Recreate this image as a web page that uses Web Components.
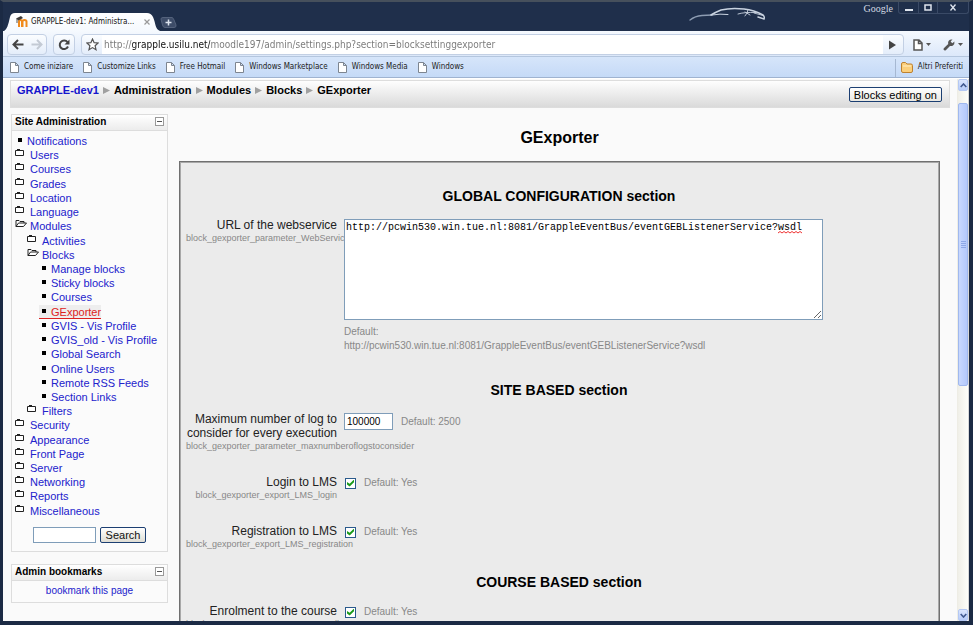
<!DOCTYPE html>
<html lang="en">
<head>
<meta charset="utf-8">
<title>GRAPPLE-dev1: Administration: Modules: Blocks: GExporter</title>
<style>
html, body { margin: 0; height: 100%; overflow: hidden; background: #1f2f4b; }
body { font-family: "Liberation Sans", Arial, sans-serif; font-size: 11px; color: #111; }
</style>
</head>
<body>
<browser-window>
  <tab-strip slot="tabs">GRAPPLE-dev1: Administra...</tab-strip>
  <tool-bar slot="tools"></tool-bar>
  <bookmark-bar slot="marks">
    <bookmark-link>Come iniziare</bookmark-link>
    <bookmark-link>Customize Links</bookmark-link>
    <bookmark-link>Free Hotmail</bookmark-link>
    <bookmark-link>Windows Marketplace</bookmark-link>
    <bookmark-link>Windows Media</bookmark-link>
    <bookmark-link>Windows</bookmark-link>
    <bookmark-link slot="end" kind="folder">Altri Preferiti</bookmark-link>
  </bookmark-bar>
  <moodle-page>
    <crumb-header slot="header"></crumb-header>
    <side-block slot="side" heading="Site Administration">
      <nav-tree>
        <nav-item kind="leaf">Notifications</nav-item>
        <nav-item>Users</nav-item>
        <nav-item>Courses</nav-item>
        <nav-item>Grades</nav-item>
        <nav-item>Location</nav-item>
        <nav-item>Language</nav-item>
        <nav-item kind="open">Modules</nav-item>
        <nav-item level="1">Activities</nav-item>
        <nav-item level="1" kind="open">Blocks</nav-item>
        <nav-item level="2" kind="leaf">Manage blocks</nav-item>
        <nav-item level="2" kind="leaf">Sticky blocks</nav-item>
        <nav-item level="2" kind="leaf">Courses</nav-item>
        <nav-item level="2" kind="leaf" current>GExporter</nav-item>
        <nav-item level="2" kind="leaf">GVIS - Vis Profile</nav-item>
        <nav-item level="2" kind="leaf">GVIS_old - Vis Profile</nav-item>
        <nav-item level="2" kind="leaf">Global Search</nav-item>
        <nav-item level="2" kind="leaf">Online Users</nav-item>
        <nav-item level="2" kind="leaf">Remote RSS Feeds</nav-item>
        <nav-item level="2" kind="leaf">Section Links</nav-item>
        <nav-item level="1">Filters</nav-item>
        <nav-item>Security</nav-item>
        <nav-item>Appearance</nav-item>
        <nav-item>Front Page</nav-item>
        <nav-item>Server</nav-item>
        <nav-item>Networking</nav-item>
        <nav-item>Reports</nav-item>
        <nav-item>Miscellaneous</nav-item>
      </nav-tree>
      <admin-search></admin-search>
    </side-block>
    <side-block slot="side" heading="Admin bookmarks">
      <bookmark-action>bookmark this page</bookmark-action>
    </side-block>
    <settings-section heading="GLOBAL CONFIGURATION section">
      <setting-row type="area" label="URL of the webservice" name="block_gexporter_parameter_WebService" value="http://pcwin530.win.tue.nl:8081/GrappleEventBus/eventGEBListenerService?wsdl"></setting-row>
    </settings-section>
    <settings-section heading="SITE BASED section">
      <setting-row type="text" label="Maximum number of log to consider for every execution" name="block_gexporter_parameter_maxnumberoflogstoconsider" value="100000" default="Default: 2500"></setting-row>
      <setting-row type="check" label="Login to LMS" name="block_gexporter_export_LMS_login" default="Default: Yes"></setting-row>
      <setting-row type="check" label="Registration to LMS" name="block_gexporter_export_LMS_registration" default="Default: Yes"></setting-row>
    </settings-section>
    <settings-section heading="COURSE BASED section">
      <setting-row type="check" label="Enrolment to the course" name="block_gexporter_export_course_enrollment" default="Default: Yes"></setting-row>
    </settings-section>
  </moodle-page>
</browser-window>

<script>
const define = (name, render) => customElements.define(name, class extends HTMLElement {
  connectedCallback() {
    if (this.shadowRoot) return;
    const t = document.createElement('template');
    t.innerHTML = '<style>:host,*{box-sizing:border-box}</style>' + render(this);
    this.attachShadow({ mode: 'open' }).append(t.content.cloneNode(true));
  }
});
const UI = '"DejaVu Sans Condensed","DejaVu Sans",sans-serif';

define('browser-window', () => `
<style>
:host{display:flex;flex-direction:column;height:100vh;border:solid #1b2a44;border-width:0 4px 4px 3px;border-top:2px solid #46505c;background:#1f2f4b}
.tabs,.tools,.marks{flex:none}
.view{flex:1;min-height:0;display:flex;border-top:1px solid #fff;background:#fafafa}
.page{flex:1;min-width:0;overflow:hidden}
</style>
<div class="tabs"><slot name="tabs"></slot></div>
<div class="tools"><slot name="tools"></slot></div>
<div class="marks"><slot name="marks"></slot></div>
<div class="view"><div class="page"><slot></slot></div><xp-scrollbar></xp-scrollbar></div>`);

define('tab-strip', () => `
<style>
:host{display:flex;align-items:flex-end;height:29px;font-family:${UI};padding-left:1px;position:relative}
.tab{display:grid;width:156px;height:19px}
.tab>*{grid-area:1/1}
.in{display:flex;align-items:center;gap:3px;padding:0 10px 0 12px;font-size:8px;z-index:1;white-space:nowrap}
.in .t{flex:1}
button{border:0;background:none;padding:0;margin:0;display:block;line-height:0}
.new{margin:0 0 3px 0}
.right{margin-left:auto;align-self:flex-start;display:flex;align-items:flex-start}
.car{margin:4px 98px 0 0}
.g{font:10px/13px "Liberation Serif",serif;color:#d3d9e2;margin-right:5px}
.wc{display:flex;border:1px solid #3a4a66;border-top:0;border-radius:0 0 3px 3px}
.wc button{width:19px;height:11px;display:grid;place-items:center}
.wc button+button{border-left:1px solid #3a4a66}
.wc button:last-child{width:31px}
</style>
<div class="tab">
<svg width="156" height="19"><defs><linearGradient id="g" x2="0" y2="1"><stop stop-color="#fff"/><stop offset="1" stop-color="#f5f9fe"/></linearGradient></defs><path d="M0 19C3 17 4 14 6 5Q7 1 11 1H143Q147 1 149 5C152 12 151 17 156 19Z" fill="url(#g)"/></svg>
<div class="in"><svg width="12" height="12" viewBox="0 0 12 12"><path d="M3 11V5.500Q3 4 4.500 4Q6 4 6 5.500V11M6.500 11V5.500Q6.500 4 8.500 4Q10.500 4 10.500 5.500V11" fill="none" stroke="#f08a1c" stroke-width="2"/><path d="M0 2.500L5 0L7 2L2.500 4.500Z" fill="#3d3a38"/><path d="M1 3V7" stroke="#555"/></svg>
<span class="t"><slot></slot></span>
<button aria-label="Close tab"><svg width="6" height="6"><path d="M.5.5L5.500 5.500M5.500.5L.5 5.500" stroke="#999" stroke-width="1.200"/></svg></button></div>
</div>
<button class="new" aria-label="New tab"><svg width="17" height="11"><path d="M1 2Q1 .5 3 .5H12Q13 .5 14 3L16 8Q16.500 10.500 14 10.500H5Q3 10.500 2.500 8Z" fill="#3d4c68" stroke="#54627c"/><path d="M5.500 5.500H11.500M8.500 2.500V8.500" stroke="#dce3ee" stroke-width="1.500"/></svg></button>
<div class="right">
<svg class="car" width="78" height="16" viewBox="0 0 78 16"><g fill="none" stroke="#c9d3e0" stroke-linecap="round"><path d="M2 14Q7 10 14 9.500L24 9" stroke="#8d9cb2" stroke-width="1.300"/><path d="M23 9Q28 6 33 4Q43 1.500 56 3Q66 4 75 9Q77 11 76 13L70 11" stroke-width="1.500"/><path d="M24 9Q32 7.500 40 8.500" stroke-width="1"/><path d="M50 8Q56 6 68 6.500M60 3.500Q60 7 57 10M57 6L62 9M66 7L75 9.500" stroke-width=".9"/></g></svg>
<span class="g">Google</span>
<div class="wc"><button aria-label="Minimize"><svg width="8" height="8"><path d="M0 6H8" stroke="#dfe5ee" stroke-width="2"/></svg></button><button aria-label="Maximize"><svg width="8" height="7"><rect x="1" y="1" width="6" height="5" fill="none" stroke="#dfe5ee" stroke-width="1.500"/></svg></button><button aria-label="Close"><svg width="6" height="7"><path d="M.5.5L5.500 6.500M5.500.5L.5 6.500" stroke="#dfe5ee" stroke-width="1.300"/></svg></button></div>
</div>`);

define('tool-bar', () => `
<style>
:host{display:flex;align-items:center;height:25px;padding:2px 6px 0 4px;gap:6px;background:linear-gradient(#f5f9fe,#dce8fa);font-family:${UI}}
button{border:0;background:none;padding:0;display:grid;place-items:center}
.grp,.one,.omni{display:flex;height:21px;border:1px solid #c3d0e4;border-radius:4px;background:linear-gradient(#fbfdff,#e4edfa)}
.grp button{width:19px}.one button{width:20px}
.omni{flex:1;min-width:0;overflow:hidden;margin-right:3px}
.omni button{width:20px}
.url{flex:1;min-width:0;background:#fff;display:grid}
input{border:0;outline:0;width:100%;padding:0 2px;margin:0;font:10px/18px ${UI};color:#777;-webkit-text-fill-color:transparent;background:linear-gradient(90deg,#777 30px,#111 30px 108px,#777 108px);-webkit-background-clip:text;background-clip:text}
.menu{display:flex;gap:12px}
.menu button{display:flex;align-items:center;gap:3px}
</style>
<div class="grp"><button aria-label="Back"><svg width="12" height="11"><path d="M6 1L1.500 5.500L6 10M2 5.500H11.500" fill="none" stroke="#444" stroke-width="2"/></svg></button><button aria-label="Forward"><svg width="12" height="11"><path d="M6 1L10.500 5.500L6 10M10 5.500H.5" fill="none" stroke="#c3cad4" stroke-width="2"/></svg></button></div>
<div class="one"><button aria-label="Reload"><svg width="12" height="12"><path d="M9.500 3.200A4.300 4.300 0 1 0 10 7.500" fill="none" stroke="#444" stroke-width="2"/><path d="M11.500.5V5.500H6.500Z" fill="#444"/></svg></button></div>
<div class="omni"><button aria-label="Bookmark this page"><svg width="13" height="13" viewBox="0 0 13 13"><path d="M6.500 1L8.100 4.700L12 5L9.100 7.700L10 11.700L6.500 9.600L3 11.700L3.900 7.700L1 5L4.900 4.700Z" fill="#fff" stroke="#555" stroke-width="1.200"/></svg></button>
<div class="url"><input aria-label="Address" value="http://grapple.usilu.net/moodle197/admin/settings.php?section=blocksettinggexporter"></div>
<button aria-label="Go"><svg width="8" height="10"><path d="M0 .5L7 5L0 9.500Z" fill="#444"/></svg></button></div>
<div class="menu"><button aria-label="Page menu"><svg width="10" height="12"><path d="M1 1H6L9 4V11H1ZM5.500 1V4.500H9" fill="#fff" stroke="#555" stroke-width="1.500"/></svg><svg width="5" height="3"><path d="M0 0H5L2.500 3Z" fill="#555"/></svg></button>
<button aria-label="Tools menu"><svg width="12" height="12"><path d="M.8 9.300L5.200 5Q4.600 2 7 .8Q8.300.2 9.500.6L7.600 2.600L9.300 4.300L11.400 2.500Q11.900 5 10 6.500Q8.500 7.300 7 6.900L2.800 11.200Q1.600 12 .9 11.100Q.1 10.200.8 9.300Z" fill="#555"/></svg><svg width="5" height="3"><path d="M0 0H5L2.500 3Z" fill="#555"/></svg></button></div>`);

define('bookmark-bar', () => `
<style>
:host{display:flex;justify-content:space-between;height:22px;padding:0 6px 0 7px;background:linear-gradient(#d6e5fa,#c5daf7);border-top:1px solid #b4c6de;border-bottom:1px solid #9fb3d0;font:8px/20px ${UI}}
div{display:flex;gap:10px}
.end{border-left:1px solid #a6b8d2;padding-left:5px;margin-top:2px;line-height:16px}
</style><div><slot></slot></div><div class="end"><slot name="end"></slot></div>`);

define('bookmark-link', h => `
<style>:host{display:block;white-space:nowrap}a{display:flex;align-items:center;gap:5px;color:#222;text-decoration:none}svg{flex:none}</style>
<a href="#">${h.getAttribute('kind') === 'folder'
  ? '<svg width="12" height="11"><path d="M.5 2Q.5.500 2 .5H4.500L6 2H10Q11.500 2 11.500 3.500V9Q11.500 10.500 10 10.500H2Q.5 10.500.5 9Z" fill="#fbcf7c" stroke="#bd8130"/><path d="M2 4H10" stroke="#fff0c8"/></svg>'
  : '<svg width="9" height="11"><path d="M.5.5H5.500L8.500 3.500V10.500H.5ZM5.500.5V3.500H8.500" fill="#fff" stroke="#7d8590"/></svg>'}<slot></slot></a>`);

define('xp-scrollbar', () => `
<style>
:host{display:flex;flex-direction:column;width:12px;flex:none;background:linear-gradient(90deg,#f0efe8,#fefefa);border-left:1px solid #eeede5;border-right:1px solid #d8d8d8}
button{border:1px solid #b4c8f4;border-radius:2px;padding:0;height:12px;width:10px;background:linear-gradient(#dbe6fe,#b6cbf9);display:grid;place-items:center;flex:none}
i{display:block}.a{flex:12}.c{flex:224}
.thumb{flex:282;border:1px solid #a0b8ee;border-radius:2px;background:linear-gradient(90deg,#c8d8fe,#b3c8fb);display:grid;place-items:center}
</style>
<button aria-label="Scroll up"><svg width="7" height="5"><path d="M.7 4L3.500 1L6.300 4" fill="none" stroke="#40588e" stroke-width="1.600"/></svg></button><i class="a"></i>
<div class="thumb"><svg width="5" height="7"><path d="M0 .5H5M0 2.500H5M0 4.500H5M0 6.500H5" stroke="#8ea8e6"/></svg></div><i class="c"></i>
<button aria-label="Scroll down"><svg width="7" height="5"><path d="M.7 1L3.500 4L6.300 1" fill="none" stroke="#40588e" stroke-width="1.600"/></svg></button>`);

define('moodle-page', () => `
<style>
:host{display:block;padding:1px 7px 0 8px}
.cols{display:flex;gap:11px;padding:6px 10px 0 0}
.side{flex:none;width:157px;display:flex;flex-direction:column;gap:12px}
main{flex:1;min-width:0}
h1{font-size:16px;line-height:20px;margin:14px 0 13px;text-align:center;color:#000}
.box{border:1px solid #707070;box-shadow:inset 0 0 0 1px #a8a8a8;background:#ebebeb;padding:25px 7px 25px 6px}
</style>
<slot name="header"></slot>
<div class="cols"><div class="side"><slot name="side"></slot></div>
<main><h1>GExporter</h1><div class="box"><slot></slot></div></main></div>`);

define('crumb-header', () => {
  const arrow = '<svg width="7" height="7"><path d="M0 0L7 3.500L0 7Z" fill="#a0a0a0"/></svg>';
  return `
<style>
:host{display:flex;justify-content:space-between;align-items:flex-start;height:28px;padding:2px 7px 0 6px;border:1px solid #ddd;background:linear-gradient(#fefefe,#dadada);margin-left:-1px}
nav{display:flex;align-items:center;gap:4px;font-weight:bold;line-height:14px;color:#000}
a{color:#1515cc;text-decoration:none}
button{margin-top:4px;height:15px;padding:0 4px;border:1px solid #1c3f72;border-radius:2px;background:linear-gradient(#fff,#e9e8e2);font:11px/12px "Liberation Sans",Arial,sans-serif;color:#000}
</style>
<nav><a href="#">GRAPPLE-dev1</a>${['Administration','Modules','Blocks','GExporter'].map(t => arrow + `<span>${t}</span>`).join('')}</nav>
<button>Blocks editing on</button>`;
});

define('side-block', h => `
<style>
:host{display:block;border:1px solid #ddd;background:#fbfbfb}
header{display:flex;justify-content:space-between;align-items:center;padding:0 3px 2px;height:16px;border-bottom:1px solid #ddd;background:linear-gradient(#fff,#ececec)}
h2{margin:0;font-size:10px;line-height:13px;color:#000}
button{width:9px;height:9px;padding:0;border:1px solid #999;background:#fff;display:grid;place-items:center}
button::before{content:"";width:5px;height:1px;background:#555}
</style>
<header><h2>${h.getAttribute('heading')}</h2><button aria-label="Hide ${h.getAttribute('heading')} block"></button></header><slot></slot>`);

define('nav-tree', () => `
<style>:host{display:block;padding:3px 3px 0}nav{display:flex;flex-direction:column;justify-content:space-between;min-height:384px}</style>
<nav><slot></slot></nav>`);

define('nav-item', h => {
  const kind = h.getAttribute('kind'), level = +h.getAttribute('level') || 0;
  const icon = kind === 'leaf' ? '<svg class="dot" width="4" height="4"><rect width="4" height="4"/></svg>'
    : kind === 'open' ? '<svg width="12" height="9"><path d="M1 7.500V1.500H4L5 2.500H9V4M1 7.500L3.500 4H11.500L8.500 7.500Z" fill="#fff" stroke="#222"/></svg>'
    : '<svg width="12" height="9"><path d="M.5 2.500H8.500V7.500H.5ZM2 1.500H5" fill="#fff" stroke="#222"/></svg>';
  return `
<style>
:host{display:flex;line-height:14px;padding-left:${level * 12}px;white-space:nowrap}
a{display:flex;gap:3px;color:#2222cc;text-decoration:none}
svg{flex:none}
.leaf{gap:5px;padding-left:3px}
.dot{margin-top:4px}
.current{color:#d22;background:#eee;box-shadow:inset 0 -1px #d22}
</style><a href="#" class="${kind || ''}${h.hasAttribute('current') ? ' current' : ''}">${icon}<slot></slot></a>`;
});

define('admin-search', () => `
<style>
:host{display:block}
form{display:flex;justify-content:center;gap:4px;padding:9px 0 8px}
input{width:63px;height:16px;border:1px solid #7f9db9;background:#fff;padding:0 2px;font-size:11px}
button{height:16px;width:46px;padding:0;border:1px solid #1c3f72;border-radius:2px;background:linear-gradient(#fff,#dfddd4);font:11px/13px "Liberation Sans",Arial,sans-serif;color:#111}
</style><form><input aria-label="Search settings"><button type="button">Search</button></form>`);

define('bookmark-action', () => `
<style>:host{display:block;text-align:center;padding:3px 0 4px;font-size:10px;line-height:14px}a{color:#2222cc;text-decoration:none}</style><a href="#"><slot></slot></a>`);

define('settings-section', h => `
<style>:host{display:block}h2{margin:0 0 13px;font-size:14px;line-height:18px;text-align:center;color:#000}</style>
<h2>${h.getAttribute('heading')}</h2><slot></slot>`);

define('setting-row', h => {
  const type = h.getAttribute('type'), v = h.getAttribute('value'), d = h.getAttribute('default');
  const control = type === 'area'
    ? `<div class="area"><textarea id="c" spellcheck="false">${v}</textarea><svg class="wave" width="24" height="3"><path d="M0 2L2 .5L4 2L6 .5L8 2L10 .5L12 2L14 .5L16 2L18 .5L20 2L22 .5L24 2" fill="none" stroke="#e33"/></svg></div><p>Default:<br>${v}</p>`
    : type === 'text' ? `<div class="line"><input id="c" type="text" value="${v}"><span>${d}</span></div>`
    : `<div class="line chk"><input id="c" type="checkbox" checked><span>${d}</span></div>`;
  return `
<style>
:host{display:flex;gap:7px;padding-bottom:22px}
:host([type=area]){padding-bottom:28px}
.lab{flex:none;width:151px;text-align:right;font-size:12px;line-height:14px;color:#222;padding-bottom:1px}
.lab label{display:block}
.lab small{display:block;font-size:9px;line-height:12px;color:#888}
.ctl{flex:1;min-width:0;color:#888;font-size:10px;line-height:14px;padding-top:1px}
.area{position:relative;font:10px/12px "Liberation Mono",monospace;max-width:479px}
textarea{display:block;width:100%;height:101px;resize:vertical;border:1px solid #7f9db9;background:#fff;padding:2px 1px;margin:0;font:inherit;color:#000;outline:0;overflow:hidden}
.wave{position:absolute;left:calc(72ch + 2px);top:12px}
p{margin:5px 0 0}
.line{display:flex;align-items:center;gap:8px}
input[type=text]{width:49px;height:17px;border:1px solid #7f9db9;padding:0 2px;margin:0;background:#fff;font:10px/14px "Liberation Sans",Arial,sans-serif;color:#000}
.chk{padding-left:1px}
input[type=checkbox]{appearance:none;width:11px;height:11px;margin:0;border:1px solid #2a5a8c;background:#fff;display:grid;place-items:center}
input[type=checkbox]:checked::before{content:"";width:7px;height:7px;background:#1a9a1a;clip-path:polygon(0 35%,38% 62%,100% 0,100% 38%,38% 100%,0 72%)}
</style>
<div class="lab"><label for="c">${h.getAttribute('label')}</label><small>${h.getAttribute('name')}</small></div>
<div class="ctl">${control}</div>`;
});
</script>
</body>
</html>
